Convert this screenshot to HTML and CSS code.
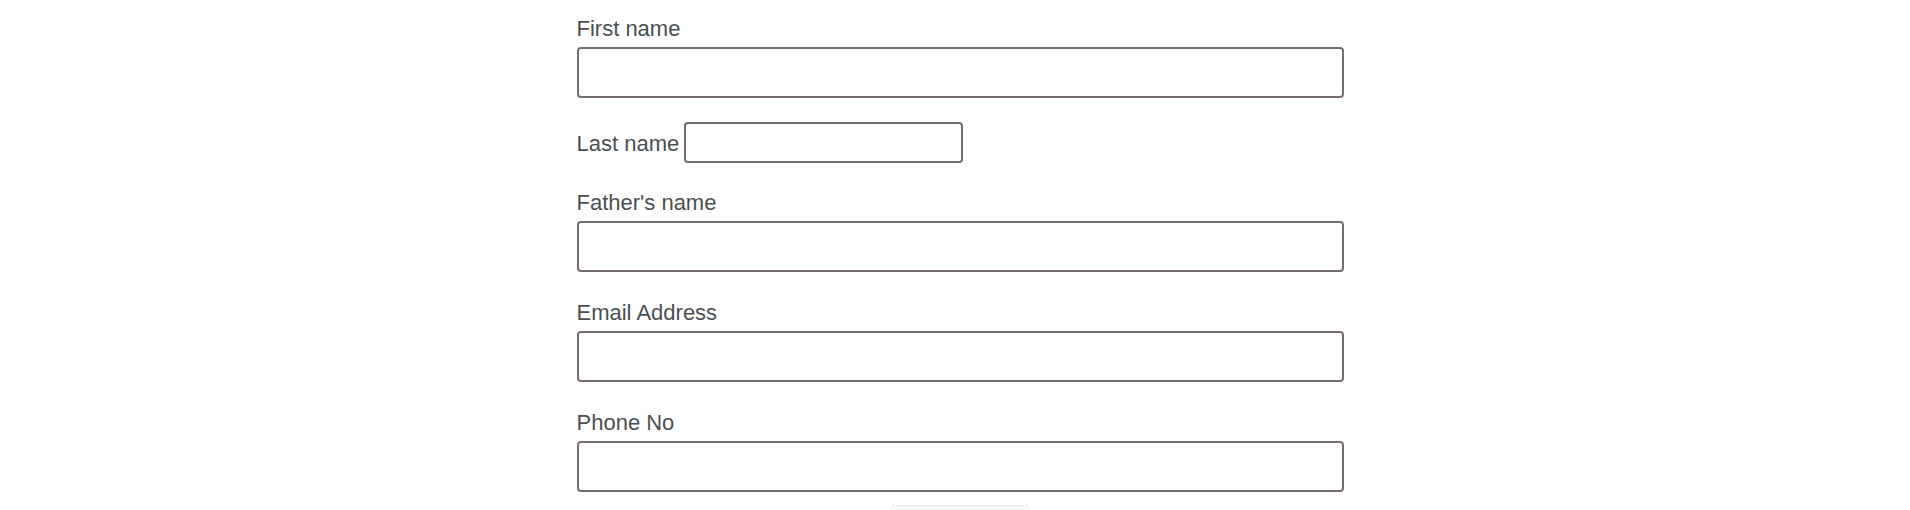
FILE: index.html
```html
<!DOCTYPE html>
<html lang="en">
<head>
<meta charset="utf-8">
<title>Registration form</title>
<link rel="stylesheet" href="styles.css">
</head>
<body>
<div class="page">
  <form class="form">
    <div class="group group-first">
      <label class="label" for="fname">First name</label>
      <input class="field" id="fname" type="text">
    </div>
    <div class="row">
      <label class="label-inline" for="lname">Last name</label>
      <input class="field-small" id="lname" type="text">
    </div>
    <div class="group">
      <label class="label" for="father">Father's name</label>
      <input class="field" id="father" type="text">
    </div>
    <div class="group">
      <label class="label" for="email">Email Address</label>
      <input class="field" id="email" type="email">
    </div>
    <div class="group">
      <label class="label" for="phone">Phone No</label>
      <input class="field" id="phone" type="tel">
    </div>
    <div class="actions">
      <button class="btn" type="submit">Submit</button>
    </div>
  </form>
</div>
</body>
</html>
```
FILE: styles.css
```css
html, body {
  margin: 0;
  padding: 0;
  background: #ffffff;
}

body {
  font-family: "Liberation Sans", Arial, sans-serif;
  color: #4a4f52;
  overflow: hidden;
}

.page {
  display: flex;
  justify-content: center;
  padding: 16px 0 0 10px;
}

.form {
  width: 767px;
  display: flex;
  flex-direction: column;
}

.group {
  display: flex;
  flex-direction: column;
  margin-bottom: 28px;
}

.group-first {
  margin-bottom: 24px;
}

.label {
  display: block;
  font-size: 22px;
  line-height: 25px;
  margin-bottom: 6px;
}

.field {
  box-sizing: border-box;
  width: 767px;
  height: 51px;
  border: 2px solid #776d6d;
  border-radius: 4px;
  background: #ffffff;
  font-size: 20px;
  padding: 0 10px;
  margin: 0;
  outline: none;
}

.row {
  display: flex;
  align-items: center;
  gap: 5px;
  margin-bottom: 27px;
}

.label-inline {
  font-size: 22px;
  line-height: 25px;
  padding-top: 2px;
}

.field-small {
  box-sizing: border-box;
  width: 279px;
  height: 41px;
  border: 2px solid #776d6d;
  border-radius: 4px;
  background: #ffffff;
  font-size: 18px;
  padding: 0 8px;
  margin: 0;
  outline: none;
}

.actions {
  display: flex;
  justify-content: center;
  margin-top: -15px;
}

.btn {
  width: 140px;
  height: 52px;
  border: 1px solid #ececec;
  border-radius: 4px;
  background: #fbfbfb;
  color: #4a4f52;
  font-family: "Liberation Sans", Arial, sans-serif;
  font-size: 18px;
}
```
